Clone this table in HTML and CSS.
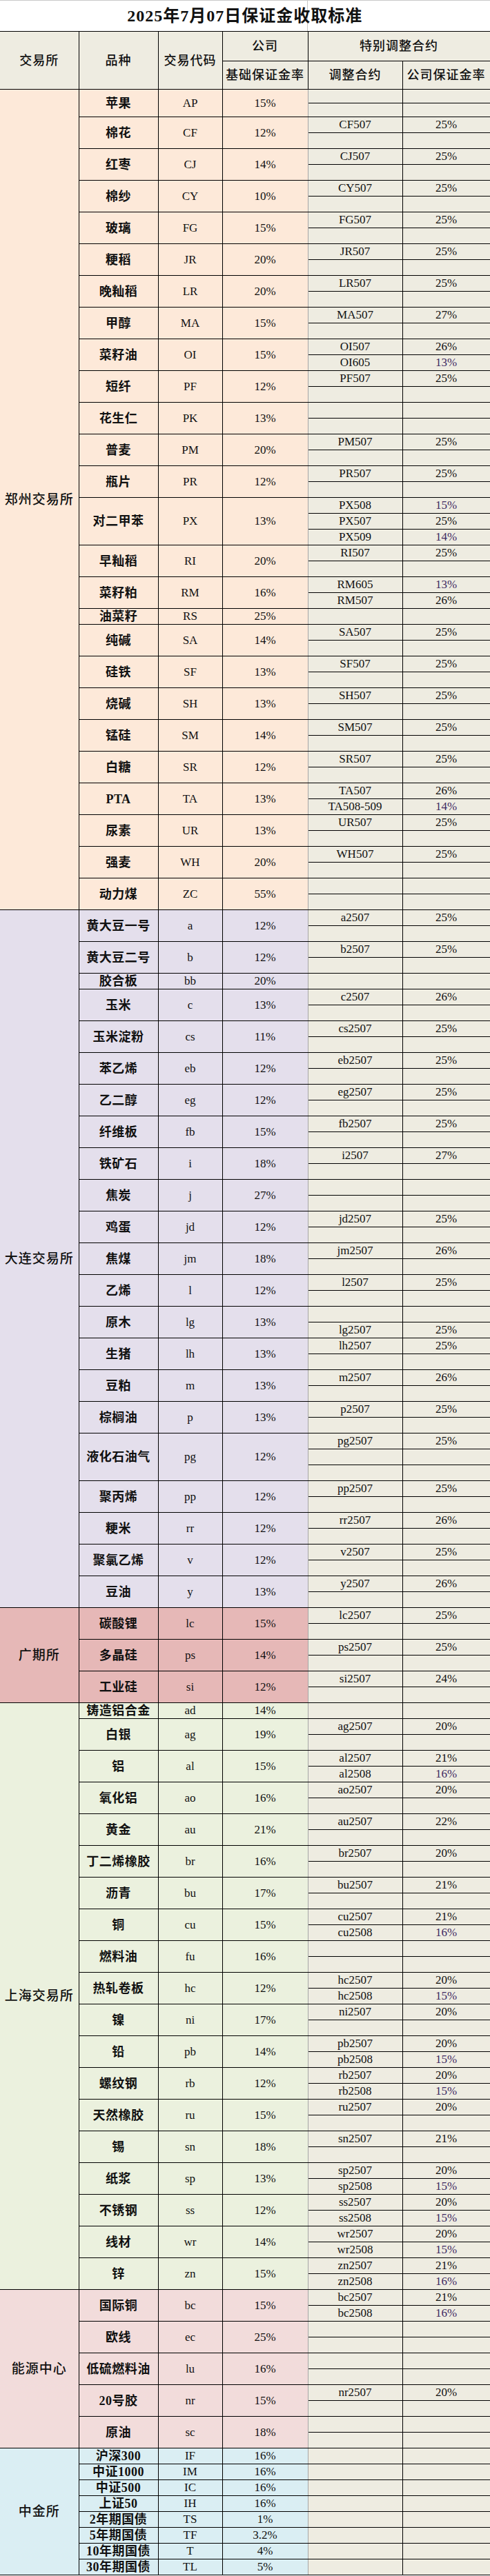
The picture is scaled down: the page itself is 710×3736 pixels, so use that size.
FILE: index.html
```html
<!DOCTYPE html>
<html lang="zh-CN">
<head>
<meta charset="utf-8">
<title>2025年7月07日保证金收取标准</title>
<link rel="stylesheet" href="styles.css">
</head>
<body>
<table class="sheet">
<colgroup><col class="c-ex"><col class="c-nm"><col class="c-cd"><col class="c-rt"><col class="c-ct"><col class="c-pr"></colgroup>
<thead>
<tr class="r-title"><td colspan="6" class="title">2025年7月07日保证金收取标准</td></tr>
<tr class="r-h1"><td rowspan="2" class="hx">交易所</td><td rowspan="2">品种</td><td rowspan="2">交易代码</td><td>公司</td><td colspan="2">特别调整合约</td></tr>
<tr class="r-h2"><td>基础保证金率</td><td>调整合约</td><td>公司保证金率</td></tr>
</thead>
<tbody class="zz">
<tr class="r-s"><td rowspan="52" class="ex">郑州交易所</td><td rowspan="2" class="nm">苹果</td><td rowspan="2">AP</td><td rowspan="2">15%</td><td></td><td></td></tr>
<tr class="r-s"><td></td><td></td></tr>
<tr><td rowspan="2" class="nm">棉花</td><td rowspan="2">CF</td><td rowspan="2">12%</td><td>CF507</td><td>25%</td></tr>
<tr><td></td><td></td></tr>
<tr><td rowspan="2" class="nm">红枣</td><td rowspan="2">CJ</td><td rowspan="2">14%</td><td>CJ507</td><td>25%</td></tr>
<tr><td></td><td></td></tr>
<tr><td rowspan="2" class="nm">棉纱</td><td rowspan="2">CY</td><td rowspan="2">10%</td><td>CY507</td><td>25%</td></tr>
<tr><td></td><td></td></tr>
<tr><td rowspan="2" class="nm">玻璃</td><td rowspan="2">FG</td><td rowspan="2">15%</td><td>FG507</td><td>25%</td></tr>
<tr><td></td><td></td></tr>
<tr><td rowspan="2" class="nm">粳稻</td><td rowspan="2">JR</td><td rowspan="2">20%</td><td>JR507</td><td>25%</td></tr>
<tr><td></td><td></td></tr>
<tr><td rowspan="2" class="nm">晚籼稻</td><td rowspan="2">LR</td><td rowspan="2">20%</td><td>LR507</td><td>25%</td></tr>
<tr><td></td><td></td></tr>
<tr><td rowspan="2" class="nm">甲醇</td><td rowspan="2">MA</td><td rowspan="2">15%</td><td>MA507</td><td>27%</td></tr>
<tr><td></td><td></td></tr>
<tr><td rowspan="2" class="nm">菜籽油</td><td rowspan="2">OI</td><td rowspan="2">15%</td><td>OI507</td><td>26%</td></tr>
<tr><td>OI605</td><td class="pu">13%</td></tr>
<tr><td rowspan="2" class="nm">短纤</td><td rowspan="2">PF</td><td rowspan="2">12%</td><td>PF507</td><td>25%</td></tr>
<tr><td></td><td></td></tr>
<tr><td rowspan="2" class="nm">花生仁</td><td rowspan="2">PK</td><td rowspan="2">13%</td><td></td><td></td></tr>
<tr><td></td><td></td></tr>
<tr><td rowspan="2" class="nm">普麦</td><td rowspan="2">PM</td><td rowspan="2">20%</td><td>PM507</td><td>25%</td></tr>
<tr><td></td><td></td></tr>
<tr><td rowspan="2" class="nm">瓶片</td><td rowspan="2">PR</td><td rowspan="2">12%</td><td>PR507</td><td>25%</td></tr>
<tr><td></td><td></td></tr>
<tr><td rowspan="3" class="nm">对二甲苯</td><td rowspan="3">PX</td><td rowspan="3">13%</td><td>PX508</td><td class="pu">15%</td></tr>
<tr><td>PX507</td><td>25%</td></tr>
<tr><td>PX509</td><td class="pu">14%</td></tr>
<tr><td rowspan="2" class="nm">早籼稻</td><td rowspan="2">RI</td><td rowspan="2">20%</td><td>RI507</td><td>25%</td></tr>
<tr><td></td><td></td></tr>
<tr><td rowspan="2" class="nm">菜籽粕</td><td rowspan="2">RM</td><td rowspan="2">16%</td><td>RM605</td><td class="pu">13%</td></tr>
<tr><td>RM507</td><td>26%</td></tr>
<tr><td class="nm">油菜籽</td><td>RS</td><td>25%</td><td></td><td></td></tr>
<tr><td rowspan="2" class="nm">纯碱</td><td rowspan="2">SA</td><td rowspan="2">14%</td><td>SA507</td><td>25%</td></tr>
<tr><td></td><td></td></tr>
<tr><td rowspan="2" class="nm">硅铁</td><td rowspan="2">SF</td><td rowspan="2">13%</td><td>SF507</td><td>25%</td></tr>
<tr><td></td><td></td></tr>
<tr><td rowspan="2" class="nm">烧碱</td><td rowspan="2">SH</td><td rowspan="2">13%</td><td>SH507</td><td>25%</td></tr>
<tr><td></td><td></td></tr>
<tr><td rowspan="2" class="nm">锰硅</td><td rowspan="2">SM</td><td rowspan="2">14%</td><td>SM507</td><td>25%</td></tr>
<tr><td></td><td></td></tr>
<tr><td rowspan="2" class="nm">白糖</td><td rowspan="2">SR</td><td rowspan="2">12%</td><td>SR507</td><td>25%</td></tr>
<tr><td></td><td></td></tr>
<tr><td rowspan="2" class="nm">PTA</td><td rowspan="2">TA</td><td rowspan="2">13%</td><td>TA507</td><td>26%</td></tr>
<tr><td>TA508-509</td><td class="pu">14%</td></tr>
<tr><td rowspan="2" class="nm">尿素</td><td rowspan="2">UR</td><td rowspan="2">13%</td><td>UR507</td><td>25%</td></tr>
<tr><td></td><td></td></tr>
<tr><td rowspan="2" class="nm">强麦</td><td rowspan="2">WH</td><td rowspan="2">20%</td><td>WH507</td><td>25%</td></tr>
<tr><td></td><td></td></tr>
<tr><td rowspan="2" class="nm">动力煤</td><td rowspan="2">ZC</td><td rowspan="2">55%</td><td></td><td></td></tr>
<tr><td></td><td></td></tr>
</tbody>
<tbody class="dl">
<tr><td rowspan="44" class="ex">大连交易所</td><td rowspan="2" class="nm">黄大豆一号</td><td rowspan="2">a</td><td rowspan="2">12%</td><td>a2507</td><td>25%</td></tr>
<tr><td></td><td></td></tr>
<tr><td rowspan="2" class="nm">黄大豆二号</td><td rowspan="2">b</td><td rowspan="2">12%</td><td>b2507</td><td>25%</td></tr>
<tr><td></td><td></td></tr>
<tr><td class="nm">胶合板</td><td>bb</td><td>20%</td><td></td><td></td></tr>
<tr><td rowspan="2" class="nm">玉米</td><td rowspan="2">c</td><td rowspan="2">13%</td><td>c2507</td><td>26%</td></tr>
<tr><td></td><td></td></tr>
<tr><td rowspan="2" class="nm">玉米淀粉</td><td rowspan="2">cs</td><td rowspan="2">11%</td><td>cs2507</td><td>25%</td></tr>
<tr><td></td><td></td></tr>
<tr><td rowspan="2" class="nm">苯乙烯</td><td rowspan="2">eb</td><td rowspan="2">12%</td><td>eb2507</td><td>25%</td></tr>
<tr><td></td><td></td></tr>
<tr><td rowspan="2" class="nm">乙二醇</td><td rowspan="2">eg</td><td rowspan="2">12%</td><td>eg2507</td><td>25%</td></tr>
<tr><td></td><td></td></tr>
<tr><td rowspan="2" class="nm">纤维板</td><td rowspan="2">fb</td><td rowspan="2">15%</td><td>fb2507</td><td>25%</td></tr>
<tr><td></td><td></td></tr>
<tr><td rowspan="2" class="nm">铁矿石</td><td rowspan="2">i</td><td rowspan="2">18%</td><td>i2507</td><td>27%</td></tr>
<tr><td></td><td></td></tr>
<tr><td rowspan="2" class="nm">焦炭</td><td rowspan="2">j</td><td rowspan="2">27%</td><td></td><td></td></tr>
<tr><td></td><td></td></tr>
<tr><td rowspan="2" class="nm">鸡蛋</td><td rowspan="2">jd</td><td rowspan="2">12%</td><td>jd2507</td><td>25%</td></tr>
<tr><td></td><td></td></tr>
<tr><td rowspan="2" class="nm">焦煤</td><td rowspan="2">jm</td><td rowspan="2">18%</td><td>jm2507</td><td>26%</td></tr>
<tr><td></td><td></td></tr>
<tr><td rowspan="2" class="nm">乙烯</td><td rowspan="2">l</td><td rowspan="2">12%</td><td>l2507</td><td>25%</td></tr>
<tr><td></td><td></td></tr>
<tr><td rowspan="2" class="nm">原木</td><td rowspan="2">lg</td><td rowspan="2">13%</td><td></td><td></td></tr>
<tr><td>lg2507</td><td>25%</td></tr>
<tr><td rowspan="2" class="nm">生猪</td><td rowspan="2">lh</td><td rowspan="2">13%</td><td>lh2507</td><td>25%</td></tr>
<tr><td></td><td></td></tr>
<tr><td rowspan="2" class="nm">豆粕</td><td rowspan="2">m</td><td rowspan="2">13%</td><td>m2507</td><td>26%</td></tr>
<tr><td></td><td></td></tr>
<tr><td rowspan="2" class="nm">棕榈油</td><td rowspan="2">p</td><td rowspan="2">13%</td><td>p2507</td><td>25%</td></tr>
<tr><td></td><td></td></tr>
<tr><td rowspan="3" class="nm">液化石油气</td><td rowspan="3">pg</td><td rowspan="3">12%</td><td>pg2507</td><td>25%</td></tr>
<tr><td></td><td></td></tr>
<tr><td></td><td></td></tr>
<tr><td rowspan="2" class="nm">聚丙烯</td><td rowspan="2">pp</td><td rowspan="2">12%</td><td>pp2507</td><td>25%</td></tr>
<tr><td></td><td></td></tr>
<tr><td rowspan="2" class="nm">粳米</td><td rowspan="2">rr</td><td rowspan="2">12%</td><td>rr2507</td><td>26%</td></tr>
<tr><td></td><td></td></tr>
<tr><td rowspan="2" class="nm">聚氯乙烯</td><td rowspan="2">v</td><td rowspan="2">12%</td><td>v2507</td><td>25%</td></tr>
<tr><td></td><td></td></tr>
<tr><td rowspan="2" class="nm">豆油</td><td rowspan="2">y</td><td rowspan="2">13%</td><td>y2507</td><td>26%</td></tr>
<tr><td></td><td></td></tr>
</tbody>
<tbody class="gq">
<tr><td rowspan="6" class="ex">广期所</td><td rowspan="2" class="nm">碳酸锂</td><td rowspan="2">lc</td><td rowspan="2">15%</td><td>lc2507</td><td>25%</td></tr>
<tr><td></td><td></td></tr>
<tr><td rowspan="2" class="nm">多晶硅</td><td rowspan="2">ps</td><td rowspan="2">14%</td><td>ps2507</td><td>25%</td></tr>
<tr><td></td><td></td></tr>
<tr><td rowspan="2" class="nm">工业硅</td><td rowspan="2">si</td><td rowspan="2">12%</td><td>si2507</td><td>24%</td></tr>
<tr><td></td><td></td></tr>
</tbody>
<tbody class="sh">
<tr><td rowspan="37" class="ex">上海交易所</td><td class="nm">铸造铝合金</td><td>ad</td><td>14%</td><td></td><td></td></tr>
<tr><td rowspan="2" class="nm">白银</td><td rowspan="2">ag</td><td rowspan="2">19%</td><td>ag2507</td><td>20%</td></tr>
<tr><td></td><td></td></tr>
<tr><td rowspan="2" class="nm">铝</td><td rowspan="2">al</td><td rowspan="2">15%</td><td>al2507</td><td>21%</td></tr>
<tr><td>al2508</td><td class="pu">16%</td></tr>
<tr><td rowspan="2" class="nm">氧化铝</td><td rowspan="2">ao</td><td rowspan="2">16%</td><td>ao2507</td><td>20%</td></tr>
<tr><td></td><td></td></tr>
<tr><td rowspan="2" class="nm">黄金</td><td rowspan="2">au</td><td rowspan="2">21%</td><td>au2507</td><td>22%</td></tr>
<tr><td></td><td></td></tr>
<tr><td rowspan="2" class="nm">丁二烯橡胶</td><td rowspan="2">br</td><td rowspan="2">16%</td><td>br2507</td><td>20%</td></tr>
<tr><td></td><td></td></tr>
<tr><td rowspan="2" class="nm">沥青</td><td rowspan="2">bu</td><td rowspan="2">17%</td><td>bu2507</td><td>21%</td></tr>
<tr><td></td><td></td></tr>
<tr><td rowspan="2" class="nm">铜</td><td rowspan="2">cu</td><td rowspan="2">15%</td><td>cu2507</td><td>21%</td></tr>
<tr><td>cu2508</td><td class="pu">16%</td></tr>
<tr><td rowspan="2" class="nm">燃料油</td><td rowspan="2">fu</td><td rowspan="2">16%</td><td></td><td></td></tr>
<tr><td></td><td></td></tr>
<tr><td rowspan="2" class="nm">热轧卷板</td><td rowspan="2">hc</td><td rowspan="2">12%</td><td>hc2507</td><td>20%</td></tr>
<tr><td>hc2508</td><td class="pu">15%</td></tr>
<tr><td rowspan="2" class="nm">镍</td><td rowspan="2">ni</td><td rowspan="2">17%</td><td>ni2507</td><td>20%</td></tr>
<tr><td></td><td></td></tr>
<tr><td rowspan="2" class="nm">铅</td><td rowspan="2">pb</td><td rowspan="2">14%</td><td>pb2507</td><td>20%</td></tr>
<tr><td>pb2508</td><td class="pu">15%</td></tr>
<tr><td rowspan="2" class="nm">螺纹钢</td><td rowspan="2">rb</td><td rowspan="2">12%</td><td>rb2507</td><td>20%</td></tr>
<tr><td>rb2508</td><td class="pu">15%</td></tr>
<tr><td rowspan="2" class="nm">天然橡胶</td><td rowspan="2">ru</td><td rowspan="2">15%</td><td>ru2507</td><td>20%</td></tr>
<tr><td></td><td></td></tr>
<tr><td rowspan="2" class="nm">锡</td><td rowspan="2">sn</td><td rowspan="2">18%</td><td>sn2507</td><td>21%</td></tr>
<tr><td></td><td></td></tr>
<tr><td rowspan="2" class="nm">纸浆</td><td rowspan="2">sp</td><td rowspan="2">13%</td><td>sp2507</td><td>20%</td></tr>
<tr><td>sp2508</td><td class="pu">15%</td></tr>
<tr><td rowspan="2" class="nm">不锈钢</td><td rowspan="2">ss</td><td rowspan="2">12%</td><td>ss2507</td><td>20%</td></tr>
<tr><td>ss2508</td><td class="pu">15%</td></tr>
<tr><td rowspan="2" class="nm">线材</td><td rowspan="2">wr</td><td rowspan="2">14%</td><td>wr2507</td><td>20%</td></tr>
<tr><td>wr2508</td><td class="pu">15%</td></tr>
<tr><td rowspan="2" class="nm">锌</td><td rowspan="2">zn</td><td rowspan="2">15%</td><td>zn2507</td><td>21%</td></tr>
<tr><td>zn2508</td><td class="pu">16%</td></tr>
</tbody>
<tbody class="ny">
<tr><td rowspan="10" class="ex">能源中心</td><td rowspan="2" class="nm">国际铜</td><td rowspan="2">bc</td><td rowspan="2">15%</td><td>bc2507</td><td>21%</td></tr>
<tr><td>bc2508</td><td class="pu">16%</td></tr>
<tr><td rowspan="2" class="nm">欧线</td><td rowspan="2">ec</td><td rowspan="2">25%</td><td></td><td></td></tr>
<tr><td></td><td></td></tr>
<tr><td rowspan="2" class="nm">低硫燃料油</td><td rowspan="2">lu</td><td rowspan="2">16%</td><td></td><td></td></tr>
<tr><td></td><td></td></tr>
<tr><td rowspan="2" class="nm">20号胶</td><td rowspan="2">nr</td><td rowspan="2">15%</td><td>nr2507</td><td>20%</td></tr>
<tr><td></td><td></td></tr>
<tr><td rowspan="2" class="nm">原油</td><td rowspan="2">sc</td><td rowspan="2">18%</td><td></td><td></td></tr>
<tr><td></td><td></td></tr>
</tbody>
<tbody class="zj">
<tr><td rowspan="8" class="ex">中金所</td><td class="nm">沪深300</td><td>IF</td><td>16%</td><td></td><td></td></tr>
<tr><td class="nm">中证1000</td><td>IM</td><td>16%</td><td></td><td></td></tr>
<tr><td class="nm">中证500</td><td>IC</td><td>16%</td><td></td><td></td></tr>
<tr><td class="nm">上证50</td><td>IH</td><td>16%</td><td></td><td></td></tr>
<tr><td class="nm">2年期国债</td><td>TS</td><td>1%</td><td></td><td></td></tr>
<tr><td class="nm">5年期国债</td><td>TF</td><td>3.2%</td><td></td><td></td></tr>
<tr><td class="nm">10年期国债</td><td>T</td><td>4%</td><td></td><td></td></tr>
<tr><td class="nm">30年期国债</td><td>TL</td><td>5%</td><td></td><td></td></tr>
</tbody>
</table>
</body>
</html>
```

FILE: styles.css
```css
html, body {
  margin: 0;
  padding: 0;
  background: #ffffff;
}

body {
  width: 710px;
  min-height: 3736px;
  font-family: "Liberation Serif", "Noto Sans CJK SC", serif;
  color: #111111;
}

.sheet {
  width: 710px;
  border-collapse: collapse;
  table-layout: fixed;
}

.c-ex { width: 114px; }
.c-nm { width: 115px; }
.c-cd { width: 93px; }
.c-rt { width: 124px; }
.c-ct { width: 137px; }
.c-pr { width: 127px; }

.sheet td {
  border: 1px solid #000000;
  padding: 0;
  height: 22px;
  font-size: 17px;
  line-height: 18px;
  text-align: center;
  vertical-align: middle;
  white-space: nowrap;
  overflow: hidden;
}

/* title + header */
.sheet thead td {
  background: #eeece1;
  font-size: 18px;
  letter-spacing: 1px;
  font-weight: 500;
}

.sheet thead td.title {
  height: 44px;
  font-size: 24px;
  font-weight: 700;
  letter-spacing: 1px;
  border-top: 1px solid #c8c8c8;
  border-right: 1px solid #c8c8c8;
  border-left: none;
  background-color: #ffffff;
  background-image: linear-gradient(to right, transparent 445px, #c8c8c8 445px, #c8c8c8 446px, transparent 446px);
}

.sheet .r-h1 td { height: 42px; }
.sheet .r-h2 td { height: 40px; }

.sheet td.hx,
.sheet td.ex {
  border-left: none;
}

/* exchange colour bands */
.zz { --bg: #fde9d9; }
.dl { --bg: #e4dfec; }
.gq { --bg: #e6b8b7; }
.sh { --bg: #ebf1de; }
.ny { --bg: #f2dcdb; }
.zj { --bg: #daeef3; }

.sheet tbody td {
  background: var(--bg);
}

.sheet tbody td:nth-last-child(-n+2) {
  background: #eeece1;
}

.sheet tbody td:nth-last-child(3) {
  border-right-color: #a6a6a6;
}

.sheet tbody td:nth-last-child(2) {
  border-left-color: #a6a6a6;
}

.sheet tr.r-s td {
  height: 19px;
}

.sheet td.ex {
  font-size: 19px;
  letter-spacing: 1px;
  font-weight: 500;
}

.sheet td.nm {
  font-size: 18px;
  font-weight: 700;
  letter-spacing: 0.5px;
}

.sheet td.pu {
  color: #3f2a63;
}
```
